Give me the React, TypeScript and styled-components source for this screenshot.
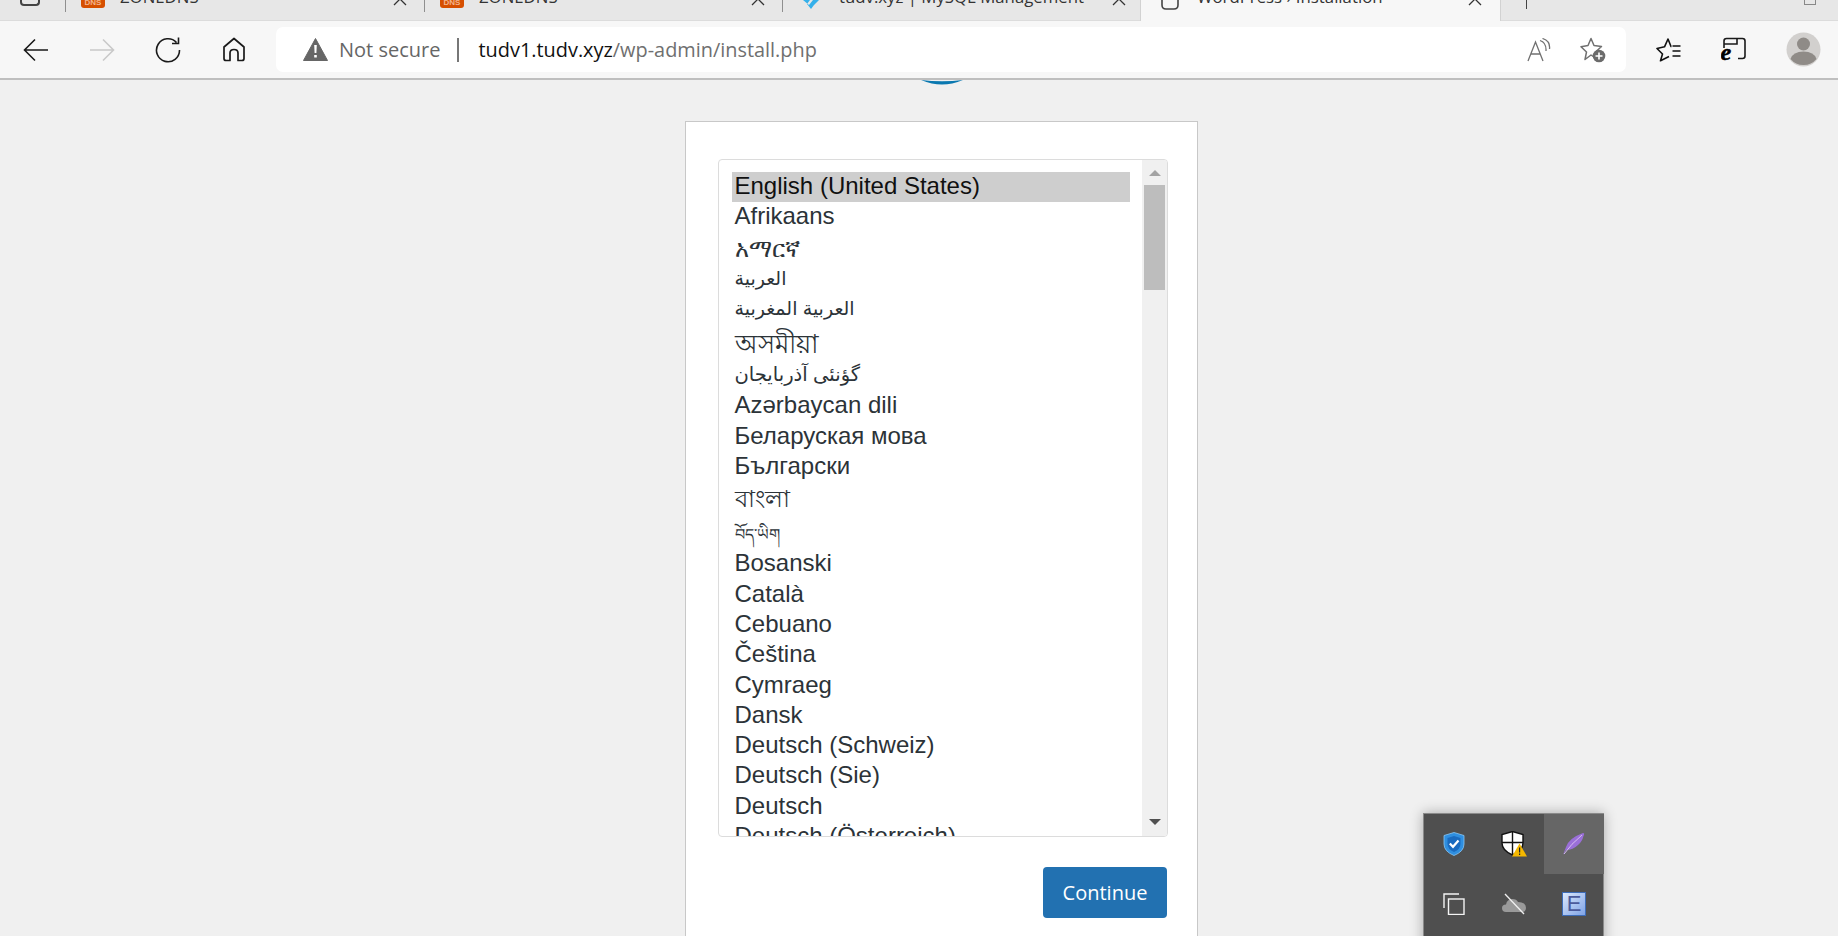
import React from "react";
import styled, { createGlobalStyle } from "styled-components";

const Global = createGlobalStyle`
  html, body { margin: 0; padding: 0; width: 100%; height: 100%; overflow: hidden; background: #f0f0f0; }
  #root { width: 1838px; height: 936px; overflow: hidden; }
  * { box-sizing: border-box; }
`;

const uiFont = `"Open Sans", "Noto Sans", "Liberation Sans", sans-serif`;

const Shell = styled.div`
  position: relative;
  width: 1838px;
  height: 936px;
  overflow: hidden;
  display: flex;
  flex-direction: column;
  font-family: ${uiFont};
`;

/* ---------- tab strip ---------- */
const TabStrip = styled.div`
  height: 21px;
  flex: none;
  display: flex;
  background: #e7e7e7;
  box-shadow: inset 0 -1px 0 #dcdcdc;
  overflow: hidden;
`;
const SidebarSlot = styled.div`
  width: 65px;
  flex: none;
  padding-left: 20px;
`;
const SidebarGlyph = styled.div`
  width: 20px;
  height: 6px;
  border: 2px solid #444;
  border-top: 0;
  border-radius: 0 0 4px 4px;
`;
const Tab = styled.div<{ $active?: boolean; $w: number; $sep?: boolean }>`
  width: ${(p) => p.$w}px;
  flex: none;
  height: ${(p) => (p.$active ? 21 : 20)}px;
  display: flex;
  align-items: flex-start;
  overflow: hidden;
  background: ${(p) => (p.$active ? "#f7f7f7" : "transparent")};
  ${(p) => p.$active && "box-shadow: inset 1px 0 0 #d2d2d2, inset -1px 0 0 #d2d2d2;"}
  ${(p) => p.$sep && "border-left: 1px solid #8f8f8f; border-image: linear-gradient(#8f8f8f 0 12px, transparent 12px) 1;"}
`;
const Favicon = styled.div<{ $left: number }>`
  margin-left: ${(p) => p.$left}px;
  width: 24px;
  height: 8px;
  flex: none;
  background: #d64f00;
  border-radius: 0 0 3px 3px;
  overflow: hidden;
  color: #f3b48c;
  font-family: "Liberation Sans", sans-serif;
  font-size: 8px;
  font-weight: 700;
  line-height: 6px;
  text-align: center;
`;
const TabTitle = styled.div<{ $left: number; $w: number }>`
  margin-left: ${(p) => p.$left}px;
  width: ${(p) => p.$w}px;
  flex: none;
  margin-top: -15px;
  height: 24px;
  line-height: 24px;
  font-size: 16.8px;
  white-space: nowrap;
  color: #333;
`;
const TabClose = styled.svg`
  flex: none;
  width: 14px;
  height: 14px;
  margin-top: -8px;
`;
const NewTabStem = styled.div`
  width: 1px;
  height: 9px;
  background: #444;
  margin-left: 25px;
  flex: none;
`;
const WindowGlyph = styled.div`
  width: 12px;
  height: 5px;
  margin-left: 277px;
  border: 1px solid #888;
  border-top: 0;
  flex: none;
`;

/* ---------- toolbar ---------- */
const Toolbar = styled.div`
  height: 59px;
  flex: none;
  display: flex;
  align-items: flex-start;
  padding: 6px 0 0 3px;
  background: #f7f7f7;
  border-bottom: 2px solid #bfbfbf;
`;
const ToolButton = styled.div<{ $w?: number }>`
  width: ${(p) => p.$w ?? 66}px;
  height: 45px;
  flex: none;
  display: flex;
  align-items: center;
  justify-content: center;
`;
const AddressBar = styled.div`
  width: 1350px;
  height: 45px;
  margin: 0 9px;
  flex: none;
  display: flex;
  align-items: center;
  background: #fff;
  border-radius: 7px;
  padding-left: 27px;
`;
const NotSecure = styled.span`
  margin-left: 11px;
  width: 118px;
  padding-bottom: 1px;
  flex: none;
  font-size: 20px;
  color: #666;
  white-space: nowrap;
`;
const Divider = styled.div`
  width: 1.5px;
  height: 24px;
  background: #777;
  flex: none;
`;
const Url = styled.div`
  margin-left: 20px;
  padding-bottom: 1px;
  flex: 1;
  font-size: 19.9px;
  white-space: nowrap;
  color: #111;
  span { color: #6f6f6f; }
`;
const AddressIcons = styled.div`
  display: flex;
  align-items: center;
  flex: none;
  gap: 29px;
  padding-right: 20px;
`;

/* ---------- page ---------- */
const Page = styled.main`
  flex: 1;
  min-height: 0;
  overflow: hidden;
  background: #f0f0f0;
  display: flex;
  flex-direction: column;
`;
const LogoStrip = styled.div`
  height: 41px;
  flex: none;
  padding-left: 921px;
`;
const Card = styled.section`
  width: 513px;
  height: 900px;
  margin-left: 685px;
  flex: none;
  background: #fff;
  border: 1px solid #c8c8c8;
  padding: 37px 0 0 32px;
`;
const ListBox = styled.div`
  width: 450px;
  height: 678px;
  display: flex;
  background: #fff;
  border: 1px solid #dcdcdc;
  border-radius: 4px;
  overflow: hidden;
`;
const Options = styled.ul`
  flex: 1;
  min-width: 0;
  margin: 0;
  padding: 12px 12px 0 13px;
  list-style: none;
  font-family: "Liberation Sans", "DejaVu Sans", "Noto Sans", sans-serif;
  font-size: 24px;
  color: #2c3338;
  overflow: hidden;
`;
const OptionRow = styled.li<{ $h: number; $nudge: number; $selected?: boolean; $size?: number }>`
  height: ${(p) => p.$h}px;
  line-height: ${(p) => p.$h + 2 * p.$nudge}px;
  padding-left: 2.5px;
  white-space: nowrap;
  overflow: hidden;
  background: ${(p) => (p.$selected ? "#cecece" : "transparent")};
  color: ${(p) => (p.$selected ? "#101010" : "inherit")};
  ${(p) => p.$size && `font-size: ${p.$size}px;`}
`;
const ScrollTrack = styled.div`
  width: 25px;
  flex: none;
  background: #f0f0f0;
  display: flex;
  flex-direction: column;
`;
const ArrowCell = styled.div`
  height: 25px;
  flex: none;
  display: flex;
  align-items: center;
  justify-content: center;
`;
const Arrow = styled.div<{ $down?: boolean }>`
  width: 0;
  height: 0;
  border-left: 6px solid transparent;
  border-right: 6px solid transparent;
  ${(p) => (p.$down ? "border-top: 6px solid #505050; margin-bottom: 4px;" : "border-bottom: 6px solid #a3a3a3;")}
`;
const Thumb = styled.div`
  height: 105px;
  margin: 0 2px;
  flex: none;
  background: #bdbdbd;
`;
const TrackRest = styled.div`
  flex: 1;
`;
const Actions = styled.div`
  width: 449px;
  margin-top: 30px;
  display: flex;
  justify-content: flex-end;
`;
const Continue = styled.button`
  width: 124px;
  height: 51px;
  border: 0;
  border-radius: 4px;
  background: #2271b1;
  color: #fff;
  font-family: ${uiFont};
  font-size: 20px;
  padding: 0;
`;

/* ---------- tray flyout ---------- */
const Tray = styled.div`
  position: absolute;
  left: 1423px;
  top: 813px;
  width: 181px;
  height: 140px;
  display: grid;
  grid-template-columns: repeat(3, 60px);
  grid-auto-rows: 60px;
  align-content: start;
  background: #4f4f4f;
  border: 1px solid #8a8a8a;
  box-shadow: 0 0 12px rgba(0, 0, 0, 0.3);
`;
const TrayCell = styled.div<{ $hot?: boolean }>`
  display: flex;
  align-items: center;
  justify-content: center;
  background: ${(p) => (p.$hot ? "#666666" : "transparent")};
`;
const EBadge = styled.div`
  width: 24px;
  height: 24px;
  display: flex;
  align-items: center;
  justify-content: center;
  background: linear-gradient(135deg, #dbe8fc, #7fa3e6);
  border: 1px solid #3d6cb8;
  color: #4a5a9c;
  font-family: "Liberation Sans", sans-serif;
  font-size: 22px;
  font-weight: 400;
  line-height: 1;
`;

const X = () => (
  <TabClose viewBox="0 0 14 14">
    <path d="M1 1L13 13M13 1L1 13" stroke="#333" strokeWidth="1.3" fill="none" />
  </TabClose>
);

const languages: { t: string; h: number; n?: number; s?: number; sel?: boolean }[] = [
  { t: "English (United States)", h: 30, sel: true },
  { t: "Afrikaans", h: 30 },
  { t: "አማርኛ", h: 32, n: 1 },
  { t: "العربية", h: 30, s: 19, n: 0 },
  { t: "العربية المغربية", h: 30, s: 19, n: 0 },
  { t: "অসমীয়া", h: 37, s: 26, n: 2 },
  { t: "گؤنئی آذربایجان", h: 30, s: 19.5, n: -2 },
  { t: "Azərbaycan dili", h: 31, n: -2 },
  { t: "Беларуская мова", h: 30 },
  { t: "Български", h: 30 },
  { t: "বাংলা", h: 32, n: 1 },
  { t: "བོད་ཡིག", h: 35, s: 16, n: 3 },
  { t: "Bosanski", h: 30 },
  { t: "Català", h: 31 },
  { t: "Cebuano", h: 30 },
  { t: "Čeština", h: 31, n: -2 },
  { t: "Cymraeg", h: 30 },
  { t: "Dansk", h: 30 },
  { t: "Deutsch (Schweiz)", h: 30 },
  { t: "Deutsch (Sie)", h: 31, n: -2 },
  { t: "Deutsch", h: 30 },
  { t: "Deutsch (Österreich)", h: 30 },
];

export default function App() {
  return (
    <Shell>
      <Global />
      <TabStrip>
        <SidebarSlot>
          <SidebarGlyph />
        </SidebarSlot>
        <Tab $w={359} $sep>
          <Favicon $left={15}>DNS</Favicon>
          <TabTitle $left={15} $w={273}>ZONEDNS</TabTitle>
          <X />
        </Tab>
        <Tab $w={358} $sep>
          <Favicon $left={15}>DNS</Favicon>
          <TabTitle $left={15} $w={272}>ZONEDNS</TabTitle>
          <X />
        </Tab>
        <Tab $w={358} $sep>
          <svg width="20" height="10" viewBox="0 0 20 10" style={{ marginLeft: 18, flex: "none" }}>
            <path d="M2 0H9L6 4L10 9L13 5L18 0H12L8 5Z" fill="#35b0ea" />
          </svg>
          <TabTitle $left={18} $w={273}>tudv.xyz | MySQL Management</TabTitle>
          <X />
        </Tab>
        <Tab $w={361} $active>
          <svg width="20" height="10" viewBox="0 0 20 10" style={{ marginLeft: 20, flex: "none" }}>
            <path d="M2 0V5Q2 9 6 9H14Q18 9 18 5V0" stroke="#444" strokeWidth="1.6" fill="none" />
          </svg>
          <TabTitle $left={17} $w={271}>WordPress › Installation</TabTitle>
          <X />
        </Tab>
        <NewTabStem />
        <WindowGlyph />
      </TabStrip>

      <Toolbar>
        <ToolButton>
          <svg width="26" height="24" viewBox="0 0 26 24" fill="none" stroke="#1a1a1a" strokeWidth="1.6">
            <path d="M25 12H2M12 1.5L1.5 12L12 22.5" />
          </svg>
        </ToolButton>
        <ToolButton>
          <svg width="26" height="24" viewBox="0 0 26 24" fill="none" stroke="#c9c9c9" strokeWidth="1.6">
            <path d="M1 12H24M14 1.5L24.5 12L14 22.5" />
          </svg>
        </ToolButton>
        <ToolButton>
          <svg width="26" height="26" viewBox="0 0 26 26" fill="none" stroke="#1a1a1a" strokeWidth="1.6">
            <path d="M21.5 5.5A11.5 11.5 0 1 0 24.5 13M23.5 0.5V6.5H17" />
          </svg>
        </ToolButton>
        <ToolButton>
          <svg width="24" height="25" viewBox="0 0 24 25" fill="none" stroke="#1a1a1a" strokeWidth="1.7">
            <path d="M12 1.5L2 10V21.5Q2 23.5 4 23.5H8V16Q8 12.5 12 12.5Q16 12.5 16 16V23.5H20Q22 23.5 22 21.5V10Z" strokeLinejoin="round" />
          </svg>
        </ToolButton>
        <AddressBar>
          <svg width="25" height="23" viewBox="0 0 25 23">
            <path d="M12.5 0.5L24.5 22.5H0.5Z" fill="#666" stroke="#666" strokeLinejoin="round" />
            <path d="M11.2 7H13.8L13.4 15H11.6Z M11.2 17H13.8V19.6H11.2Z" fill="#fff" />
          </svg>
          <NotSecure>Not secure</NotSecure>
          <Divider />
          <Url>
            tudv1.tudv.xyz<span>/wp-admin/install.php</span>
          </Url>
          <AddressIcons>
            <svg width="24" height="24" viewBox="0 0 24 24" fill="none" stroke="#707070" strokeWidth="1.3">
              <path d="M1 23L8.5 4L16 23M3.8 16H13.2" />
              <path d="M13 2.5Q19.5 4.5 19 13M15.5 0.5Q23.5 3 22.5 11" />
            </svg>
            <svg width="26" height="26" viewBox="0 0 26 26">
              <path d="M11 1.5L14 8.5L21.5 9.5L16 14.5L17 22L11 18L5 22.5L6.5 15L1 9.8L8 8.5Z" fill="none" stroke="#707070" strokeWidth="1.5" strokeLinejoin="round" />
              <circle cx="19" cy="19" r="6.3" fill="#6b6b6b" />
              <path d="M19 15.5V22.5M15.5 19H22.5" stroke="#fff" strokeWidth="1.6" />
            </svg>
          </AddressIcons>
        </AddressBar>
        <ToolButton>
          <svg width="25" height="24" viewBox="0 0 25 24" fill="none" stroke="#111" strokeWidth="1.6">
            <path d="M15.5 8.5H15L12 1L8.5 8.8L1 10.5L6.5 16L4.5 22.8L13 18.5" strokeLinejoin="round" />
            <path d="M16.5 8H24.5M16.5 13H24.5M16.5 18H24.5" />
          </svg>
        </ToolButton>
        <ToolButton>
          <svg width="26" height="26" viewBox="0 0 26 26" fill="none" stroke="#1a1a1a" strokeWidth="1.6">
            <path d="M3 11V4Q3 1.5 5.5 1.5H21.5Q24 1.5 24 4V19Q24 21.5 21.5 21.5H17M3 7H16V1.5" />
            <text x="-0.5" y="23" fontFamily="'Liberation Serif', serif" fontWeight="700" fontStyle="italic" fontSize="24" fill="#000" stroke="#000" strokeWidth="0.6">e</text>
          </svg>
        </ToolButton>
        <ToolButton $w={72}>
          <svg width="35" height="35" viewBox="0 0 35 35">
            <circle cx="17.5" cy="17.5" r="17" fill="#d2d0ce" />
            <circle cx="17.5" cy="12" r="6.5" fill="#8f8b87" />
            <path d="M4.5 27Q7 19.5 17.5 19.5Q28 19.5 30.5 27Q25.5 33 17.5 33Q9.5 33 4.5 27Z" fill="#8f8b87" />
          </svg>
        </ToolButton>
      </Toolbar>

      <Page>
        <LogoStrip>
          <svg width="42" height="5" viewBox="0 0 42 5" style={{ display: "block" }}>
            <path d="M0 0Q21 2.5 42 0Q31 4.5 21 4.5Q11 4.5 0 0Z" fill="#0a78b0" />
          </svg>
        </LogoStrip>
        <Card>
          <ListBox>
            <Options>
              {languages.map((l) => (
                <OptionRow key={l.t} $h={l.h} $nudge={l.n ?? -1} $size={l.s} $selected={l.sel}>
                  {l.t}
                </OptionRow>
              ))}
            </Options>
            <ScrollTrack>
              <ArrowCell>
                <Arrow />
              </ArrowCell>
              <Thumb />
              <TrackRest />
              <ArrowCell>
                <Arrow $down />
              </ArrowCell>
            </ScrollTrack>
          </ListBox>
          <Actions>
            <Continue>Continue</Continue>
          </Actions>
        </Card>
      </Page>

      <Tray>
        <TrayCell>
          <svg width="22" height="24" viewBox="0 0 22 24">
            <path d="M11 0.5L21 3.5V12Q21 19.5 11 23.5Q1 19.5 1 12V3.5Z" fill="#2f8fe0" stroke="#8cc8f5" strokeWidth="0.8" />
            <path d="M11 4L17.5 6V12Q17.5 17 11 20Q4.5 17 4.5 12V6Z" fill="#1a6bc0" />
            <path d="M6.8 11.5L10 14.8L15.5 8.5" fill="none" stroke="#fff" strokeWidth="2.2" />
          </svg>
        </TrayCell>
        <TrayCell>
          <svg width="26" height="26" viewBox="0 0 26 26">
            <path d="M11.5 0.5L22 3.5V12Q22 19.5 11.5 24Q1 19.5 1 12V3.5Z" fill="#fff" stroke="#111" strokeWidth="1.4" />
            <path d="M11.5 1V24M1 11.5H22" stroke="#111" strokeWidth="1.4" />
            <path d="M18.5 12.5L26 25.5H11Z" fill="#f5b800" />
            <path d="M18 16.5H19.2V21.5H18ZM18 22.5H19.2V24H18Z" fill="#222" />
          </svg>
        </TrayCell>
        <TrayCell $hot>
          <svg width="24" height="24" viewBox="0 0 24 24">
            <path d="M1 23L4 15Q7 6 21 1Q23 1 21.5 4Q20 10 16 13Q11 18 4 18Z" fill="#9a6fd8" />
            <path d="M2 22Q9 12 20 3" stroke="#d4bdf0" strokeWidth="1" fill="none" />
          </svg>
        </TrayCell>
        <TrayCell>
          <svg width="22" height="22" viewBox="0 0 22 22" fill="none" stroke="#f4f4f4" strokeWidth="1.4">
            <path d="M1 15V1H16" />
            <rect x="5.5" y="6" width="15.5" height="15.5" />
          </svg>
        </TrayCell>
        <TrayCell>
          <svg width="26" height="22" viewBox="0 0 26 22">
            <path d="M5 19Q1 19 1 15Q1 11.5 5 11.5Q6 6 11.5 6Q15.5 6 17 9Q25 9 25 15Q25 19 21 19Z" fill="#9a9a9a" />
            <path d="M4 1L23 21" stroke="#f0f0f0" strokeWidth="1.3" />
          </svg>
        </TrayCell>
        <TrayCell>
          <EBadge>E</EBadge>
        </TrayCell>
      </Tray>
    </Shell>
  );
}
